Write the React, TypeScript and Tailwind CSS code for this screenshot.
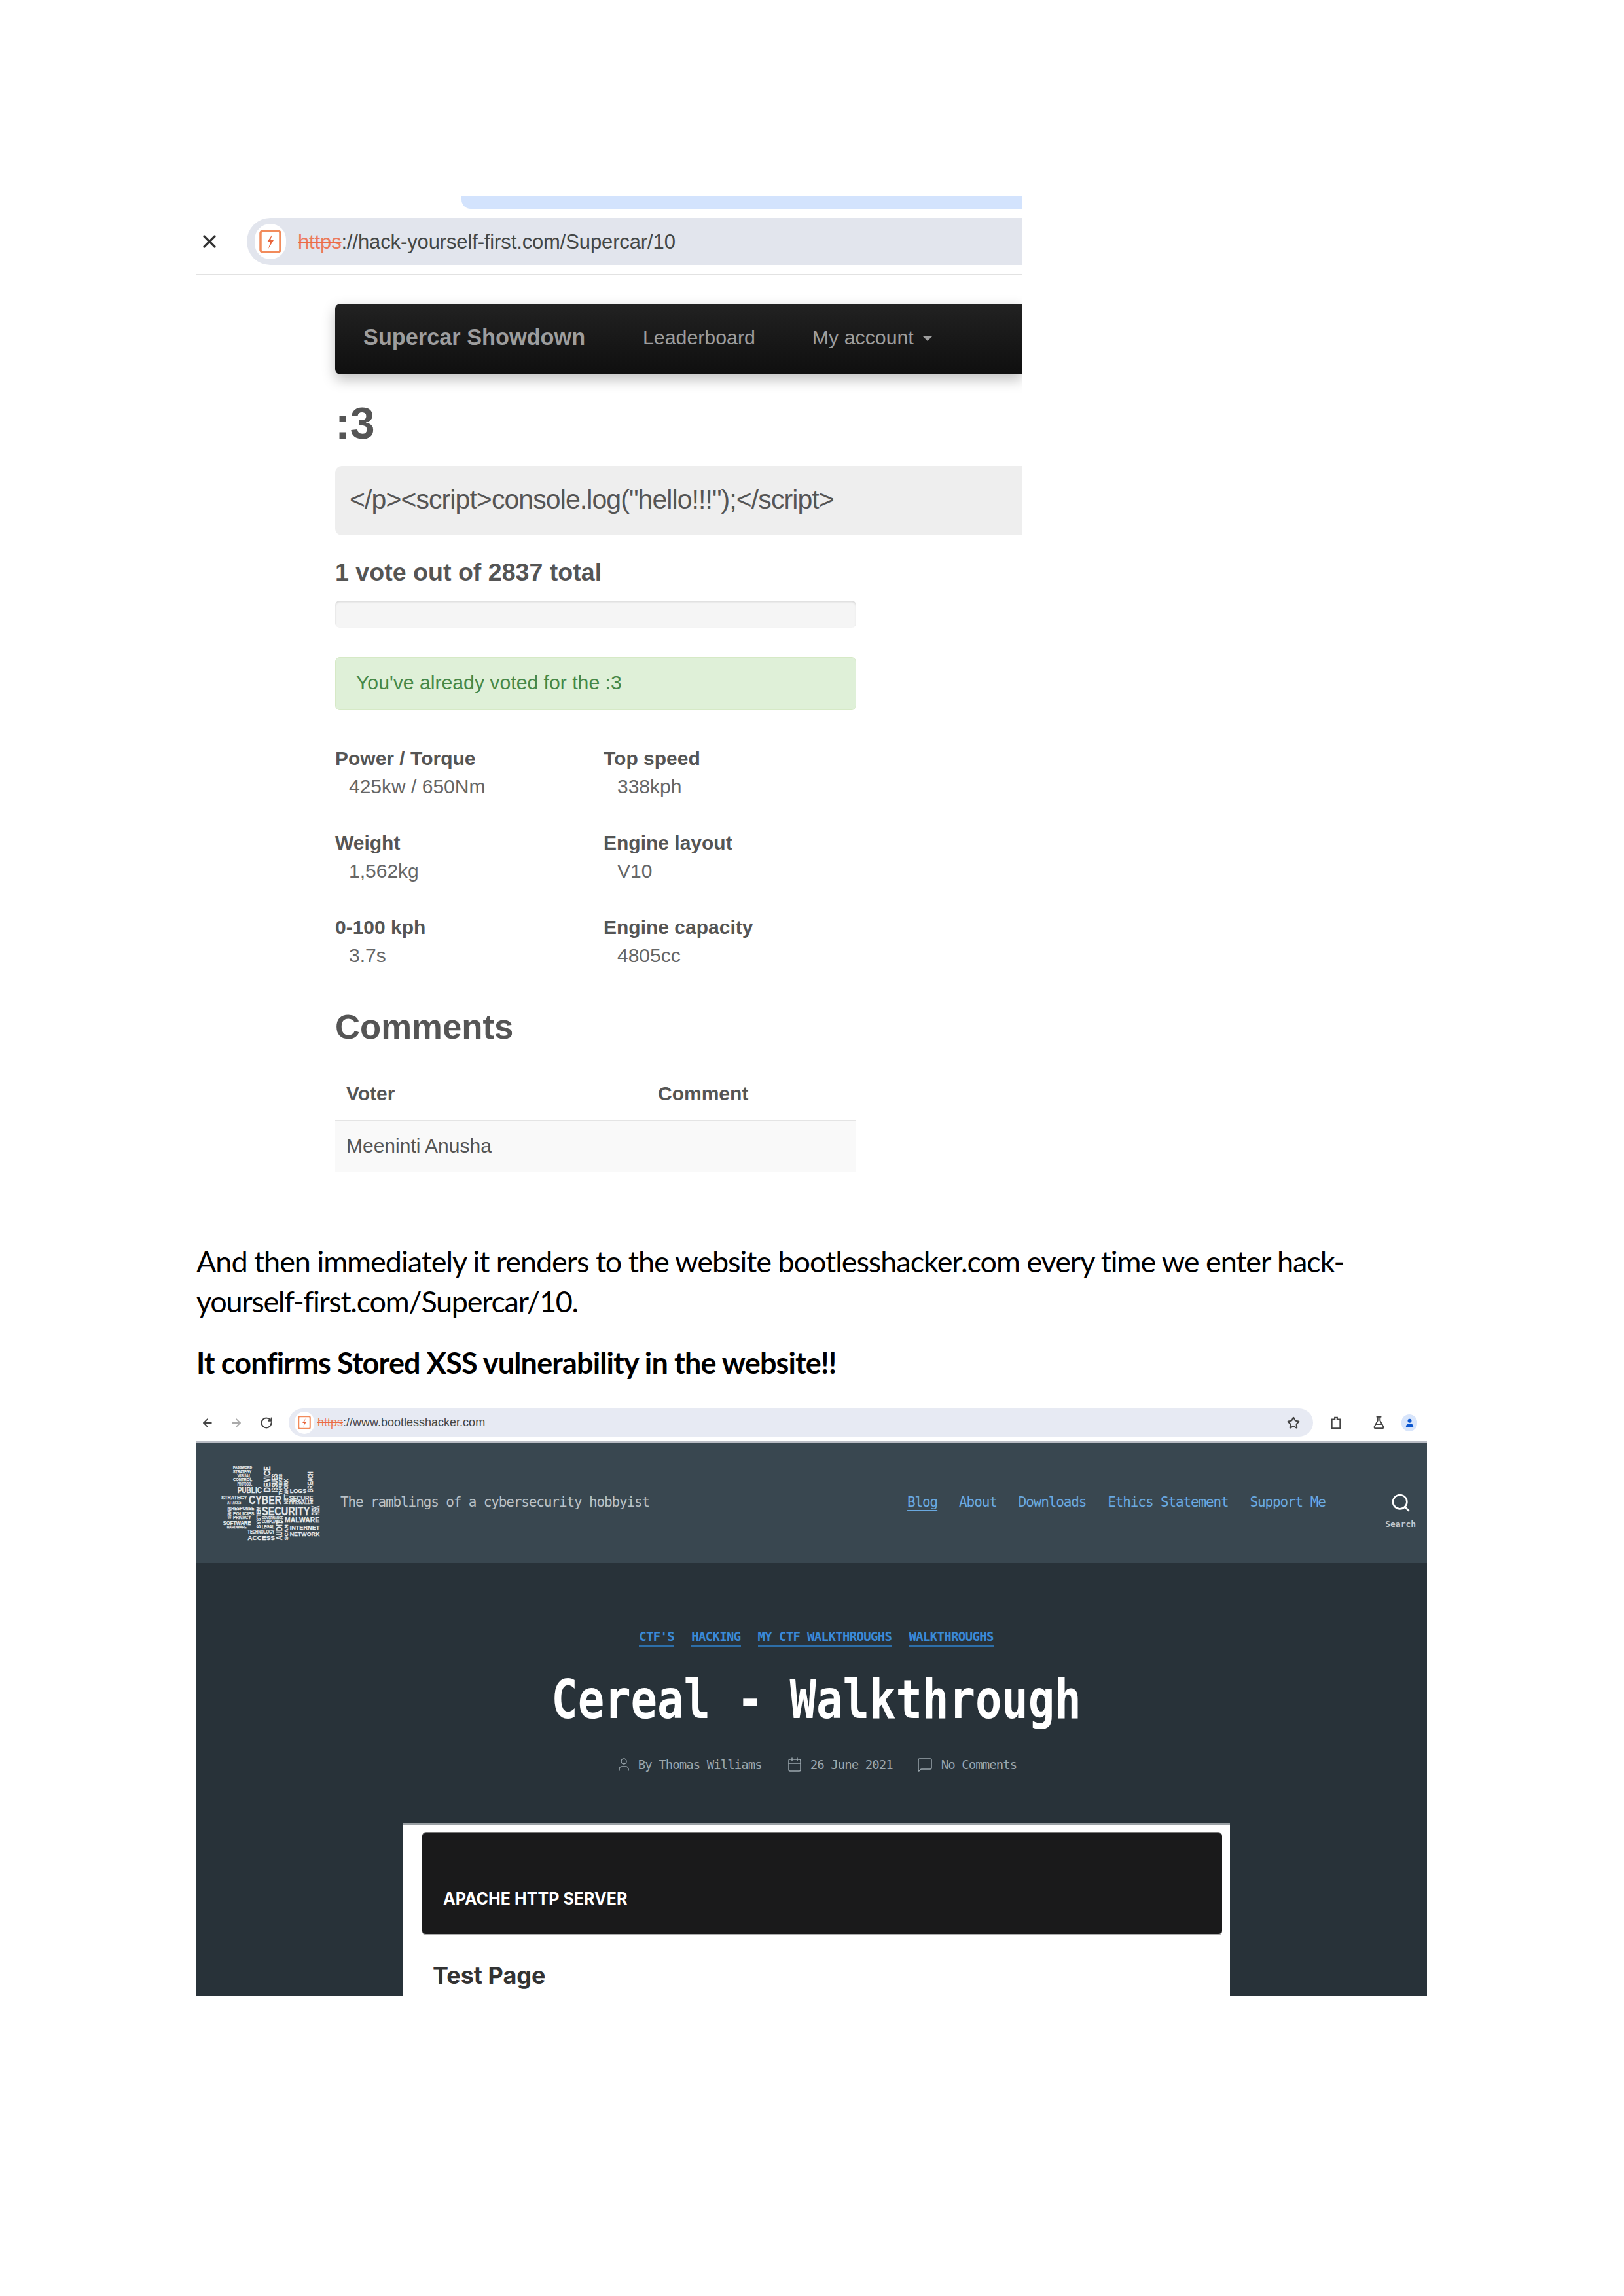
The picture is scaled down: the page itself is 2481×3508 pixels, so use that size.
import { ArrowLeft, ArrowRight, Calendar, FlaskConical, MessageSquare, RotateCw, Search, Star, User, X } from "lucide-react";

const sans = "font-['Liberation_Sans',Arial,sans-serif]";
const mono = "font-['DejaVu_Sans_Mono',monospace]";

function SiteIcon({ big }: { big: boolean }) {
  return (
    <svg viewBox="0 0 34 36" className={big ? "w-[34px] h-[36px]" : "w-[20px] h-[21px]"} fill="none">
      <rect x="2" y="2" width="30" height="32" rx="3" stroke="#f28b5b" strokeWidth="3.5" />
      <path d="M20 7 L12 19 H17 L14 29 L22 16 H17 Z" fill="#e8663d" />
    </svg>
  );
}

function Spec({ label, value }: { label: string; value: string }) {
  return (
    <div className="h-[129px]">
      <div className="text-[30px] leading-[43px] font-bold text-[#555]">{label}</div>
      <div className="text-[30px] leading-[43px] pl-[21px] text-[#666]">{value}</div>
    </div>
  );
}

type W = [string, number, number, number, number, boolean?];
const words: W[] = [
  ["PASSWORD", 108, 195, 92, 102], ["STRATEGY", 108, 192, 108, 122], ["VISUAL", 128, 190, 126, 142],
  ["CONTROL", 108, 195, 146, 160], ["PROTOCOL", 128, 195, 166, 180], ["PUBLIC", 128, 240, 182, 212],
  ["DEVICE", 248, 280, 90, 210, true], ["ISSUES", 285, 312, 125, 210, true], ["THREATS", 318, 334, 125, 222, true],
  ["NETWORK", 340, 362, 148, 265, true], ["LOGS", 368, 445, 190, 212], ["BREACH", 452, 476, 115, 210, true],
  ["STRATEGY", 55, 172, 222, 242], ["ATTACKS", 82, 145, 248, 265], ["CYBER", 180, 330, 225, 265],
  ["SECURE", 365, 475, 225, 248], ["FIREWALLS", 365, 475, 252, 265], ["RESPONSE", 100, 205, 275, 292],
  ["SECURITY", 240, 460, 275, 315], ["RISK", 468, 505, 272, 315, true], ["SERVER", 82, 100, 278, 332, true],
  ["POLICIES", 108, 205, 298, 314], ["PRIVACY", 108, 190, 318, 332], ["SYSTEM", 212, 234, 275, 375, true],
  ["GOVERNANCE", 240, 338, 320, 332], ["MALWARE", 345, 505, 322, 348], ["SOFTWARE", 62, 190, 340, 360],
  ["COMPLIANCE", 240, 338, 338, 352], ["LEGAL", 240, 298, 358, 376], ["AUDIT", 305, 335, 340, 430, true],
  ["SCAN", 345, 362, 358, 430, true], ["INTERNET", 368, 505, 358, 380], ["NETWORK", 368, 505, 390, 412],
  ["HARDWARE", 80, 170, 364, 376], ["TECHNOLOGY", 175, 298, 380, 400], ["ACCESS", 175, 300, 408, 430],
];

function Logo() {
  return (
    <svg viewBox="0 11 190 150" className="w-[190px] h-[150px] shrink-0" fill="#e4e8ea" stroke="#e4e8ea" strokeWidth="0.25">
      {words.map(([t, x0, x1, y0, y1, v], i) => {
        const a = x0 / 3, b = x1 / 3, c = y0 / 3, d = y1 / 3;
        return v ? (
          <text key={i} transform={`translate(${b - 0.5} ${d}) rotate(-90)`} textLength={d - c} lengthAdjust="spacingAndGlyphs"
            fontSize={(b - a) / 0.74} fontWeight="700" fontFamily="Liberation Sans, sans-serif">{t}</text>
        ) : (
          <text key={i} x={a} y={d} textLength={b - a} lengthAdjust="spacingAndGlyphs"
            fontSize={(d - c) / 0.74} fontWeight="700" fontFamily="Liberation Sans, sans-serif">{t}</text>
        );
      })}
    </svg>
  );
}

export default function App() {
  return (
    <div className={`w-[2481px] h-[3508px] bg-white pt-[300px] ${sans}`}>
      {/* first screenshot */}
      <section className="ml-[300px] w-[1262px] overflow-hidden">
        <div className="ml-[405px] h-[19px] bg-[#d3e3fd] rounded-bl-[14px]" />
        <div className="mt-[14px] h-[72px] flex items-center">
          <X className="w-[32px] h-[32px] ml-[4px] text-[#333] shrink-0" strokeWidth={2.6} />
          <div className="ml-[41px] flex-1 h-[72px] bg-[#e2e5ed] rounded-l-[36px] flex items-center pl-[12px]">
            <div className="w-[48px] h-[54px] rounded-full bg-white flex items-center justify-center shrink-0"><SiteIcon big /></div>
            <div className="ml-[18px] mt-[2px] text-[31px] text-[#444746] tracking-[-0.13px]">
              <span className="text-[#ec7a5c] line-through decoration-[#ec6a45]">https</span>://hack-yourself-first.com/Supercar/10
            </div>
          </div>
        </div>
        <div className="mt-[13px] h-[2px] bg-[#e2e2e2]" />
        <div className="pl-[212px] pt-[44px]">
          <nav className="h-[108px] rounded-l-[8px] bg-gradient-to-b from-[#222] to-[#0f0f0f] shadow-[0_8px_20px_rgba(0,0,0,0.25)] flex items-center pl-[43px] pb-[4px]">
            <span className="text-[34.3px] font-bold text-[#9d9d9d] w-[340px] whitespace-nowrap">Supercar Showdown</span>
            <span className="ml-[87px] text-[30.3px] text-[#9d9d9d]">Leaderboard</span>
            <span className="ml-[87px] text-[30.3px] text-[#9d9d9d]">My account</span>
            <span className="ml-[13px] mt-[2px] w-0 h-0 border-x-[8px] border-x-transparent border-t-[8px] border-t-[#9d9d9d]" />
          </nav>
          <h1 className="mt-[40px] h-[68px] text-[68px] leading-[68px] font-bold text-[#555]">:3</h1>
          <div className="mt-[32px] h-[106px] bg-[#eee] rounded-l-[10px] flex items-center pl-[22px] pb-[2px] text-[41px] tracking-[-0.92px] text-[#555]">
            {'</p><script>console.log("hello!!!");</script>'}
          </div>
          <h2 className="mt-[34px] text-[37.6px] leading-[44px] font-bold text-[#555]">1 vote out of 2837 total</h2>
          <div className="w-[796px]">
            <div className="mt-[22px] h-[41px] rounded-[7px] bg-[#f5f5f5] shadow-[inset_0_2px_3px_rgba(0,0,0,0.12)]" />
            <div className="mt-[45px] h-[81px] rounded-[7px] bg-[#dff0d8] border border-[#d6e9c6] flex items-center pl-[31px] pb-[4px] text-[30.2px] text-[#468847]">
              You've already voted for the :3
            </div>
            <div className="mt-[52px] grid grid-cols-[410px_1fr]">
              <Spec label="Power / Torque" value="425kw / 650Nm" />
              <Spec label="Top speed" value="338kph" />
              <Spec label="Weight" value="1,562kg" />
              <Spec label="Engine layout" value="V10" />
              <Spec label="0-100 kph" value="3.7s" />
              <Spec label="Engine capacity" value="4805cc" />
            </div>
            <h3 className="mt-[12px] text-[52.7px] leading-[66px] font-bold text-[#555]">Comments</h3>
            <div className="mt-[37px] h-[73px] border-b border-[#e4e4e4] grid grid-cols-[476px_1fr] pl-[17px] items-center text-[30px] font-bold text-[#555] pb-[10px]">
              <span>Voter</span><span>Comment</span>
            </div>
            <div className="h-[78px] bg-[#f9f9f9] flex items-center pl-[17px] pb-[2px] text-[30px] text-[#555]">Meeninti Anusha</div>
          </div>
        </div>
      </section>

      {/* document text */}
      <div className="ml-[300px] mt-[107px] font-['Lato',sans-serif] text-[45px] leading-[61px] tracking-[-1.05px] text-black">
        <p className="whitespace-nowrap">And then immediately it renders to the website bootlesshacker.com every time we enter hack-</p>
        <p className="whitespace-nowrap tracking-[-1.3px]">yourself-first.com/Supercar/10.</p>
        <p className="mt-[33px] whitespace-nowrap font-bold tracking-[-0.85px]">It confirms Stored XSS vulnerability in the website!!</p>
      </div>

      {/* second screenshot */}
      <section className="ml-[300px] mt-[38px] w-[1880px]">
        <div className="h-[53px] flex items-center pb-[6px] border-b-2 border-[#b9bcc4]">
          <ArrowLeft className="ml-[7px] w-[20px] h-[20px] text-[#444]" strokeWidth={2.2} />
          <ArrowRight className="ml-[24px] w-[20px] h-[20px] text-[#aaa]" strokeWidth={2.2} />
          <RotateCw className="ml-[26px] w-[20px] h-[20px] text-[#444]" strokeWidth={2.4} />
          <div className="ml-[24px] w-[1565px] h-[43px] rounded-full bg-[#e7eaf3] flex items-center pl-[9px]">
            <div className="w-[30px] h-[34px] rounded-full bg-white flex items-center justify-center shrink-0"><SiteIcon big={false} /></div>
            <div className="ml-[5px] text-[18px] text-[#444746] flex-1">
              <span className="text-[#ec7a5c] line-through decoration-[#ec6a45]">https</span>://www.bootlesshacker.com
            </div>
            <Star className="w-[20px] h-[20px] mr-[20px] text-[#444]" strokeWidth={2.4} />
          </div>
          <svg viewBox="0 0 24 24" className="ml-[24px] w-[22px] h-[22px]" fill="none" stroke="#444" strokeWidth="2.4">
            <path d="M5 6h5V3h4v3h5v15H5z" />
          </svg>
          <div className="ml-[22px] w-[1px] h-[20px] bg-[#cfd6e4]" />
          <FlaskConical className="ml-[21px] w-[21px] h-[21px] text-[#444]" strokeWidth={2.2} />
          <div className="ml-[24px] w-[24px] h-[26px] rounded-full bg-[#d8e5fb] flex items-center justify-center">
            <svg viewBox="0 0 16 16" className="w-[15px] h-[15px]" fill="#0b57d0"><circle cx="8" cy="5" r="3.2" /><path d="M2 15c0-4 2.500-5.500 6-5.500s6 1.500 6 5.500z" /></svg>
          </div>
        </div>
        <header className={`h-[184px] bg-[#394750] flex items-center pl-[20px] ${mono}`}>
          <Logo />
          <span className="ml-[10px] text-[21px] tracking-[-1.13px] text-[#b9c1c6] whitespace-nowrap">The ramblings of a cybersecurity hobbyist</span>
          <nav className="ml-[394px] flex gap-[33px] text-[21px] tracking-[-1.13px] text-[#6aa9e0] whitespace-nowrap">
            <span className="underline underline-offset-[5px]">Blog</span><span>About</span><span>Downloads</span><span>Ethics Statement</span><span>Support Me</span>
          </nav>
          <div className="ml-[52px] w-[1px] h-[34px] bg-[#52606a]" />
          <div className="ml-[38px] w-[48px] flex flex-col items-center mt-[24px]">
            <Search className="w-[32px] h-[32px] text-white" strokeWidth={2} />
            <span className="mt-[9px] text-[13px] leading-[16px] font-bold text-[#c3c9cd]">Search</span>
          </div>
        </header>
        <div className={`h-[661px] bg-[#283239] pl-[14px] overflow-hidden ${mono}`}>
          <div className="pt-[100px] flex justify-center gap-[26px] text-[19px] tracking-[-0.66px] leading-[24px] font-bold text-[#3a8ad8]">
            <span className="border-b-2 border-[#2d6ea8] pb-[2px]">CTF'S</span>
            <span className="border-b-2 border-[#2d6ea8] pb-[2px]">HACKING</span>
            <span className="border-b-2 border-[#2d6ea8] pb-[2px]">MY CTF WALKTHROUGHS</span>
            <span className="border-b-2 border-[#2d6ea8] pb-[2px]">WALKTHROUGHS</span>
          </div>
          <h1 className="mt-[33px] text-center text-[82px] leading-[96px] font-bold text-white scale-x-[0.82] whitespace-nowrap">Cereal - Walkthrough</h1>
          <div className="mt-[39px] flex justify-center items-center text-[19px] tracking-[-0.94px] leading-[24px] text-[#9aa6ad] whitespace-nowrap">
            <User className="w-[24px] h-[24px] text-[#9aa6ad]" strokeWidth={1.5} />
            <span className="ml-[10px]">By Thomas Williams</span>
            <Calendar className="ml-[38px] w-[24px] h-[24px] text-[#9aa6ad]" strokeWidth={1.5} />
            <span className="ml-[12px]">26 June 2021</span>
            <MessageSquare className="ml-[37px] w-[24px] h-[24px] text-[#9aa6ad]" strokeWidth={1.5} />
            <span className="ml-[13px]">No Comments</span>
          </div>
          <article className="mt-[78px] ml-[302px] w-[1263px] h-[300px] bg-white border-t-2 border-[#9aa0a4] pt-[11px] pl-[29px] pr-[12px] font-['Inter',sans-serif]">
            <div className="h-[158px] rounded-[6px] bg-[#1a1a1b] border-y-2 border-t-[#777] border-b-[#aaa] flex items-end pl-[32px] pb-[40px]">
              <span className="text-[25px] leading-[28px] font-bold text-white tracking-[0.05px]">APACHE HTTP SERVER</span>
            </div>
            <h2 className="mt-[37px] ml-[16px] text-[36px] leading-[48px] font-bold text-[#333]">Test Page</h2>
          </article>
        </div>
      </section>
    </div>
  );
}
